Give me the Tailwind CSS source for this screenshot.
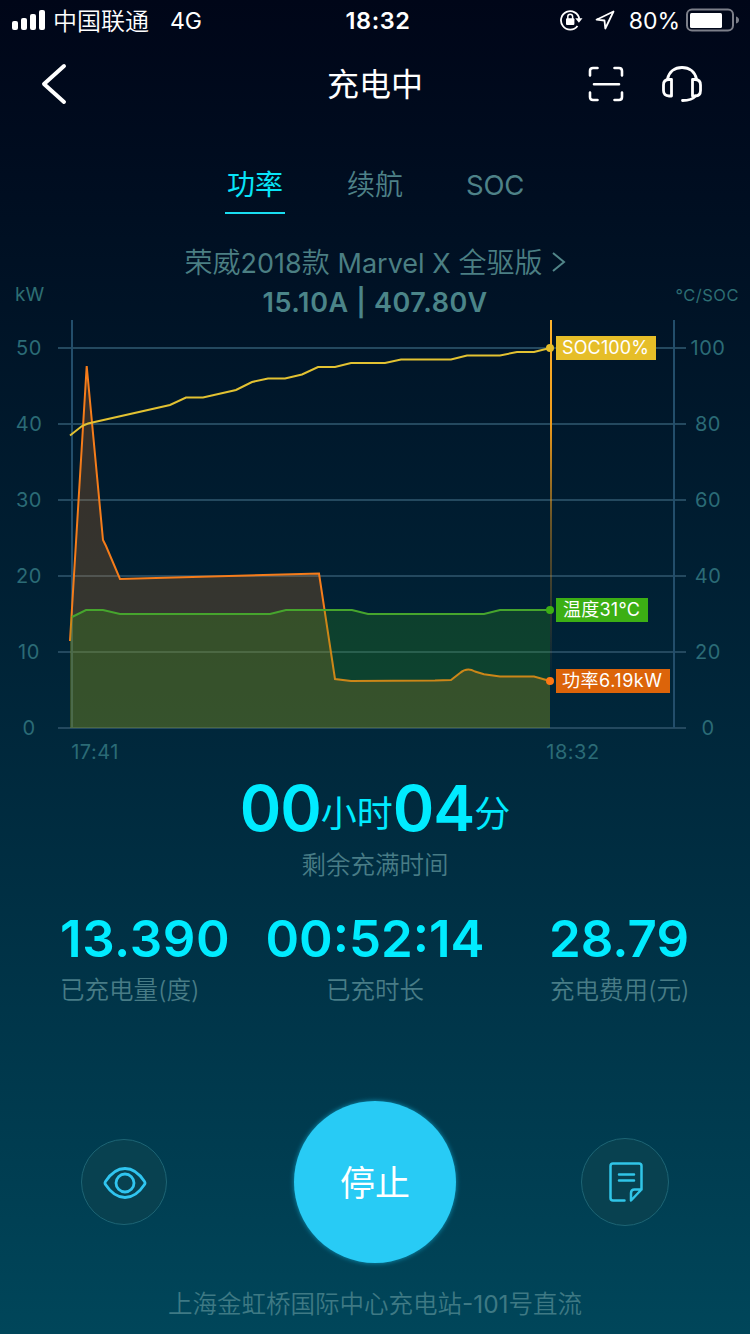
<!DOCTYPE html>
<html lang="zh-CN">
<head>
  <meta charset="UTF-8">
  <meta name="viewport" content="width=device-width, initial-scale=1.0">
  <title>充电中</title>
  <script src="https://cdn.jsdelivr.net/npm/@tailwindcss/browser@4"></script>
</head>
<body class="font-['Inter','Noto_Sans_CJK_SC',sans-serif] bg-[#000618]">
  <div class="w-[750px] h-[1334px] overflow-hidden flex flex-col bg-linear-to-b from-[#000618] to-[#00465a] text-white">

    <!-- status bar -->
    <div class="h-10 shrink-0 grid grid-cols-3 items-center pl-3 pr-2.5 text-2xl leading-none whitespace-nowrap">
      <div class="flex items-center">
        <svg class="w-[34px] h-5" viewBox="0 0 34 20" fill="#fff">
          <rect x="0" y="11" width="6" height="9" rx="2"/>
          <rect x="9" y="8" width="6" height="12" rx="2"/>
          <rect x="18" y="4" width="6" height="16" rx="2"/>
          <rect x="27" y="0" width="6" height="20" rx="2"/>
        </svg>
        <span class="ml-[7px] pt-[3px] font-[350]">中国联通</span>
        <span class="ml-[21px] pt-[3px] text-[23px]">4G</span>
      </div>
      <div class="pt-0.5 text-center font-semibold text-[23.500px] tracking-[0.6px] pl-1">18:32</div>
      <div class="flex items-center justify-end">
        <svg class="w-[23px] h-[22px]" viewBox="0 0 23 22" fill="none" stroke="#fff" stroke-width="1.8">
          <path d="M17.5 17A9.2 9.2 0 1 1 19.3 10"/>
          <path d="M15.3 9.3h7.2l-3.6 4.4z" fill="#fff" stroke="none"/>
          <rect x="6" y="9.3" width="8.4" height="6.7" rx="1" fill="#fff" stroke="none"/>
          <path d="M7.8 10V7.6a2.4 2.4 0 0 1 4.8 0V10" stroke-width="1.5"/>
        </svg>
        <svg class="w-5 h-5 ml-3" viewBox="0 0 20 20" fill="none" stroke="#fff" stroke-width="1.8" stroke-linejoin="round">
          <path d="M18.5 1.5L1.5 9.7l8 .8.8 8z"/>
        </svg>
        <span class="ml-3.5 pt-[3px] text-[23px]">80%</span>
        <svg class="w-[54px] h-6 ml-1.5" viewBox="0 0 54 24">
          <rect x="1" y="1.5" width="46" height="21" rx="5" fill="none" stroke="#7c7f89" stroke-width="2"/>
          <rect x="4" y="5" width="32" height="15" rx="1.5" fill="#fff"/>
          <path d="M50 8.5q3 1 3 3.5t-3 3.5z" fill="#7c7f89"/>
        </svg>
      </div>
    </div>

    <!-- nav bar -->
    <div class="h-[88px] shrink-0 grid grid-cols-3 items-center px-10">
      <svg class="w-7 h-11" viewBox="0 0 28 44" fill="none" stroke="#fff" stroke-width="4" stroke-linecap="round" stroke-linejoin="round">
        <path d="M24 4L4 22l20 18"/>
      </svg>
      <h1 class="pt-0.5 text-center text-[32px] leading-none font-normal">充电中</h1>
      <div class="flex justify-end items-center gap-[37px] pr-[7px]">
        <svg class="w-9 h-9" viewBox="0 0 36 36" fill="none" stroke="#fff" stroke-width="2.6" stroke-linecap="round">
          <path d="M2 9.5V5q0-3 3-3h4.500M26.500 2H31q3 0 3 3v4.500M34 26.500V31q0 3-3 3h-4.500M9.500 34H5q-3 0-3-3v-4.500M6 18.300h25"/>
        </svg>
        <svg class="w-[42px] h-9" viewBox="0 0 42 36" fill="none" stroke="#fff" stroke-width="2.8" stroke-linecap="round" stroke-linejoin="round">
          <path d="M6.500 13C8 6 13.500 1.500 21 1.500S34 6 35.500 13"/>
          <path d="M10.500 13.500v16.500H8q-5.500 0-5.500-5.500V19q0-5.500 5.500-5.500z"/>
          <path d="M31.500 13.500v16.500H34q5.500 0 5.500-5.500V19q0-5.500-5.500-5.500z"/>
          <path d="M34.500 30q-3.500 4.500-13 4.500"/>
        </svg>
      </div>
    </div>

    <!-- tabs -->
    <div class="h-[116px] shrink-0 flex justify-center pt-[38px] gap-[60px] text-[28px] leading-[38px] text-[#4e8288]">
      <div class="w-[60px] h-12 text-center border-b-2 border-[#19dcf0] text-[#08e4f8]">功率</div>
      <div class="w-[60px] text-center font-[350]">续航</div>
      <div class="w-[60px] text-center text-[27.500px] tracking-[-0.3px] whitespace-nowrap">SOC</div>
    </div>

    <!-- car model -->
    <div class="h-9 shrink-0 flex items-center justify-center gap-2 text-[28px] leading-none text-[#4b7f83] font-[350]">
      <span class="pt-0.5 whitespace-nowrap">荣威<span class="font-normal text-[27px]">2018</span>款 <span class="font-normal text-[27px]">Marvel X</span> 全驱版</span>
      <svg class="w-[15px] h-5" viewBox="0 0 15 20" fill="none" stroke="#518689" stroke-width="2">
        <path d="M2 1l11 9-11 9"/>
      </svg>
    </div>
    <div class="h-10 shrink-0 flex justify-between text-[#2d6e73] leading-none">
      <span class="w-24 pl-[15px] pt-[5px] text-[19px] leading-[19px]">kW</span>
      <span class="pt-[9px] text-[27px] font-semibold tracking-[0.6px] text-[#4b8589]">15.10A | 407.80V</span>
      <span class="w-24 pr-[11px] pt-[7px] text-right text-[16.500px] leading-[17px] tracking-[0.5px]">°C/SOC</span>
    </div>

    <!-- chart -->
    <svg class="w-[750px] h-[450px] shrink-0" viewBox="0 320 750 450" fill="none">
      <defs>
        <linearGradient id="cursor" x1="0" y1="320" x2="0" y2="680" gradientUnits="userSpaceOnUse">
          <stop offset="0" stop-color="#ffb42d"/>
          <stop offset="0.28" stop-color="#ef9c1c"/>
          <stop offset="0.55" stop-color="#ef9c1c" stop-opacity="0.45"/>
          <stop offset="1" stop-color="#ef8c1c" stop-opacity="0"/>
        </linearGradient>
      </defs>
      <g stroke="#24495f" stroke-width="2">
        <path d="M58 348H686M58 424H686M58 500H686M58 576H686M58 652H686M58 728H686"/>
        <path d="M72 320V728M674 320V728" stroke="#234e6b"/>
      </g>

      <path d="M70 728V641L87 368L103 540L120 579L319 573.500L335 679L351 681L435 680.500L451 680L460 673Q467 667 475 671.500L484 674.300L500 676.500H534L550 681V728z" fill="#f08020" fill-opacity="0.22"/>
      <path d="M70 641L86.700 366L103 540L106 546L120 579L319 573.500L335 679L351 681L435 680.500L451 680L460 673Q467 667 475 671.500L484 674.300L500 676.500H534L550 681" stroke="#f57c1a" stroke-width="2"/>
      <path d="M551 320V680" stroke="url(#cursor)" stroke-width="2"/>
      <path d="M70 728V617L86 610H103L120 614H270L286 610H352L368 614H484L500 610H550V728z" fill="#3caf14" fill-opacity="0.22"/>
      <path d="M72 617L86 610H103L120 614H270L286 610H352L368 614H484L500 610H550" stroke="#46a52d" stroke-width="2"/>
      <path d="M70 435.500L82 426L88 423.500L170 405L186 397.500H203L236 390L252 382L268 378.500H285L302 374.500L318 367H335L351 363H385L401 359.500H451L467 355.500H500L517 352H534L550 348" stroke="#e2c232" stroke-width="2"/>

      <circle cx="550" cy="348" r="4" fill="#e6be28"/>
      <circle cx="550" cy="610" r="4" fill="#3caf14"/>
      <circle cx="550" cy="681" r="4" fill="#ff7814"/>
      <rect x="556" y="336" width="100" height="24" fill="#e6be28"/>
      <rect x="556" y="598" width="92" height="24" fill="#3caf14"/>
      <rect x="556" y="669" width="114" height="24" fill="#dc640a"/>
      <g fill="#fff" font-size="18">
        <text x="562" y="354" textLength="87">SOC100%</text>
        <text x="563" y="616" textLength="77">温度31°C</text>
        <text x="562" y="687" textLength="100">功率6.19kW</text>
      </g>

      <g fill="#2b6b76" font-size="20" text-anchor="middle" letter-spacing="0.5">
        <text x="29" y="355">50</text>
        <text x="29" y="431">40</text>
        <text x="29" y="507">30</text>
        <text x="29" y="583">20</text>
        <text x="29" y="659">10</text>
        <text x="29" y="735">0</text>
        <text x="708" y="355">100</text>
        <text x="708" y="431">80</text>
        <text x="708" y="507">60</text>
        <text x="708" y="583">40</text>
        <text x="708" y="659">20</text>
        <text x="708" y="735">0</text>
        <text x="95" y="759">17:41</text>
        <text x="573" y="759">18:32</text>
      </g>
    </svg>

    <!-- remaining time -->
    <div class="h-[140px] shrink-0 text-center whitespace-nowrap">
      <div class="h-20 flex justify-center items-start text-[#00ebff] text-[36px] font-normal leading-[76px]">
        <span class="text-[63px] font-semibold tracking-[-1px]">00</span><span class="pt-1.5">小时</span><span class="text-[63px] font-semibold tracking-[-1px]">04</span><span class="pt-1.5">分</span>
      </div>
      <div class="text-[24.500px] leading-[30px] font-[350] text-[#487c86]">剩余充满时间</div>
    </div>

    <!-- totals -->
    <div class="h-[190px] shrink-0 flex pl-[60px] whitespace-nowrap text-[24.500px] font-[350] text-[#487c86]">
      <div class="w-[205px]">
        <div class="text-[51px] leading-[58px] font-semibold tracking-[0.6px] text-[#00ebff]">13.390</div>
        <div class="mt-[7px] leading-[30px]">已充电量(度)</div>
      </div>
      <div class="w-[220px] text-center">
        <div class="text-[51px] leading-[58px] font-semibold text-[#00ebff]">00:52:14</div>
        <div class="mt-[7px] leading-[30px]">已充时长</div>
      </div>
      <div class="ml-[64px] w-[140px]">
        <div class="text-[51px] leading-[58px] font-semibold text-[#00ebff]">28.79</div>
        <div class="mt-[7px] pl-px leading-[30px]">充电费用(元)</div>
      </div>
    </div>

    <!-- actions -->
    <div class="h-[164px] shrink-0 grid grid-cols-[1fr_162px_1fr] items-center px-[81px]">
      <div class="size-[86px] rounded-full border border-[#1d6474] bg-[#084150] flex items-center justify-center">
        <svg class="w-11 h-8 mt-0.5 ml-px" viewBox="0 0 44 32" fill="none" stroke="#30c5f0" stroke-width="2.800">
          <path d="M2.500 14.500Q11 1.500 22 1.500T41.500 14.500Q42.500 16 41.500 17.500Q33 30.500 22 30.500T2.500 17.500Q1.500 16 2.500 14.500z"/>
          <circle cx="22" cy="16" r="9"/>
        </svg>
      </div>
      <div class="size-[162px] rounded-full bg-[#28cbf5] shadow-[0_0_5px_#0f94b8] flex items-center justify-center pt-0.5 text-[35px] font-normal">停止</div>
      <div class="size-[88px] justify-self-end rounded-full border border-[#1d6474] bg-[#084150] flex items-center justify-center">
        <svg class="w-[34px] h-10 ml-0.5" viewBox="0 0 34 40" fill="none" stroke="#30c5e8" stroke-width="2.500" stroke-linecap="round" stroke-linejoin="round">
          <path d="M15.500 38.500H4q-2.500 0-2.500-2.500V4q0-2.500 2.500-2.500h26q2.500 0 2.500 2.500v23.500L22 38.500V31q0-3.500 3.500-3.500h7M10 12.500h15M10 18.500h15"/>
        </svg>
      </div>
    </div>

    <!-- station -->
    <div class="pt-[25px] text-center text-[24.500px] leading-[30px] font-[350] text-[#3e7984]">上海金虹桥国际中心充电站<span class="font-normal">-101</span>号直流</div>
  </div>
</body>
</html>
